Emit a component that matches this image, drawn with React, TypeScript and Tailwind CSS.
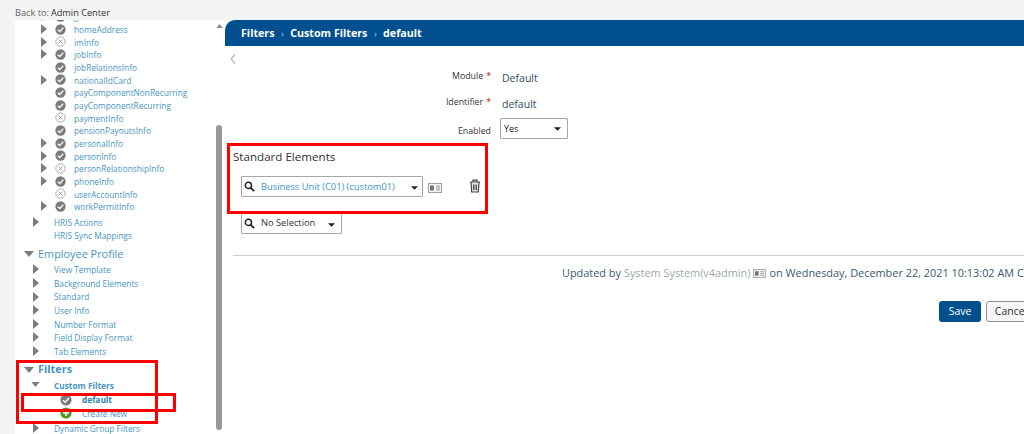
import React from "react";

const font = { fontFamily: '"Open Sans", "Noto Sans", sans-serif' };

function Tri({ down = false, className = "" }: { down?: boolean; className?: string }) {
  return down ? (
    <svg viewBox="0 0 10 6" className={className}><path d="M0 0H10L5 6Z" fill="#7d7d7d" /></svg>
  ) : (
    <svg viewBox="0 0 6 10" className={className}><path d="M0 0L6 5L0 10Z" fill="#7d7d7d" /></svg>
  );
}

function Ok({ className = "" }: { className?: string }) {
  return (
    <svg viewBox="0 0 12 12" className={className}>
      <circle cx="6" cy="6" r="5.6" fill="#7c7c7c" />
      <path d="M3 6.2L5.2 8.2L9 4" fill="none" stroke="#f4f4f4" strokeWidth="1.5" />
    </svg>
  );
}

function Off({ className = "" }: { className?: string }) {
  return (
    <svg viewBox="0 0 12 12" className={className}>
      <circle cx="6" cy="6" r="5.1" fill="#fff" stroke="#9a9a9a" strokeWidth="0.9" />
      <path d="M3.8 3.8L8.2 8.2M8.2 3.8L3.8 8.2" fill="none" stroke="#8c8c8c" strokeWidth="0.9" />
    </svg>
  );
}

function Search() {
  return (
    <svg viewBox="0 0 12 12" className="w-[11px] h-[11px] shrink-0">
      <circle cx="4.8" cy="4.8" r="3.4" fill="none" stroke="#222" strokeWidth="1.6" />
      <path d="M7.4 7.4L11 11" stroke="#222" strokeWidth="2" />
    </svg>
  );
}

function Caret({ className = "" }: { className?: string }) {
  return (
    <svg viewBox="0 0 8 4" className={`w-[7px] h-[4px] shrink-0 ${className}`}>
      <path d="M0 0H8L4 4Z" fill="#222" />
    </svg>
  );
}

function Card({ className = "" }: { className?: string }) {
  return (
    <svg viewBox="0 0 14 10" className={`shrink-0 ${className}`}>
      <rect x="0.5" y="0.5" width="13" height="9" fill="#f4f4f4" stroke="#a0a0a0" />
      <rect x="2" y="2.5" width="4" height="5" fill="#777" />
      <path d="M8 3H12M8 5H12M8 7H12" stroke="#999" />
    </svg>
  );
}

const leafRows: [string, boolean, boolean][] = [
  ["globalInfo", true, true],
  ["homeAddress", true, true],
  ["imInfo", true, false],
  ["jobInfo", true, true],
  ["jobRelationsInfo", false, true],
  ["nationalIdCard", true, true],
  ["payComponentNonRecurring", false, true],
  ["payComponentRecurring", false, true],
  ["paymentInfo", false, false],
  ["pensionPayoutsInfo", false, true],
  ["personalInfo", true, true],
  ["personInfo", true, true],
  ["personRelationshipInfo", true, false],
  ["phoneInfo", true, true],
  ["userAccountInfo", false, false],
  ["workPermitInfo", true, true],
];

const profile = ["View Template", "Background Elements", "Standard", "User Info", "Number Format", "Field Display Format", "Tab Elements"];

const link = "text-[#4795c4]";

function LeafRow({ label, arrow, ok }: { label: string; arrow: boolean; ok: boolean }) {
  return (
    <div className="flex items-center h-[12.68px] pl-[26px] text-[8.3px] leading-none whitespace-nowrap">
      <span className="w-[14px] shrink-0 flex">{arrow && <Tri className="w-[6px] h-[10px]" />}</span>
      {ok ? <Ok className="w-[11px] h-[11px] shrink-0" /> : <Off className="w-[11px] h-[11px] shrink-0" />}
      <span className={`ml-[8px] pt-[2px] ${link}`}>{label}</span>
    </div>
  );
}

function GroupRow({ label, arrow = true }: { label: string; arrow?: boolean }) {
  return (
    <div className="flex items-center h-[13.6px] pl-[18px] text-[8.3px] leading-none whitespace-nowrap">
      <span className="w-[21px] shrink-0 flex">{arrow && <Tri className="w-[6px] h-[10px]" />}</span>
      <span className={`pt-[2px] ${link}`}>{label}</span>
    </div>
  );
}

function Section({ label, bold = false }: { label: string; bold?: boolean }) {
  return (
    <div className="flex items-center h-[24px] pl-[9px] text-[10.9px] leading-none whitespace-nowrap">
      <Tri down className="w-[10px] h-[6px] shrink-0" />
      <span className={`ml-[4px] ${link} ${bold ? "font-bold" : ""}`}>{label}</span>
    </div>
  );
}

function Sidebar() {
  return (
    <aside className="relative w-[210px] shrink-0 ml-[15px] h-full bg-white overflow-hidden">
      <div className="-mt-[10px]">
        {leafRows.map(([l, a, o]) => (
          <LeafRow key={l} label={l} arrow={a} ok={o} />
        ))}
        <div className="h-[2.3px]" />
        <GroupRow label="HRIS Actions" />
        <GroupRow label="HRIS Sync Mappings" arrow={false} />
        <Section label="Employee Profile" />
        <div className="-mt-[3.6px]">
          {profile.map((l) => (
            <GroupRow key={l} label={l} />
          ))}
        </div>
        <Section label="Filters" bold />
        <div className="flex items-center h-[13px] -mt-[3.4px] pl-[16px] text-[8.3px] leading-none font-bold">
          <Tri down className="w-[9px] h-[5px] shrink-0" />
          <span className={`ml-[14px] pt-[2px] ${link}`}>Custom Filters</span>
        </div>
        <div className="flex items-center h-[15px] mt-[1px] pl-[45px] text-[8.3px] leading-none font-bold">
          <Ok className="w-[12px] h-[12px] shrink-0" />
          <span className="ml-[10px] pt-[1px] text-[#2f7fb0]">default</span>
        </div>
        <div className="flex items-center h-[12px] pl-[45px] text-[8.3px] leading-none">
          <svg viewBox="0 0 12 12" className="w-[12px] h-[12px] shrink-0">
            <circle cx="6" cy="6" r="5.6" fill="#4d9a1f" />
            <path d="M6 3V9M3 6H9" stroke="#fff" strokeWidth="1.6" />
          </svg>
          <span className={`ml-[10px] pt-[1px] ${link}`}>Create New</span>
        </div>
        <div className="h-[2px]" />
        <GroupRow label="Dynamic Group Filters" />
      </div>
      <svg viewBox="0 0 8 5" className="absolute left-[201px] top-[4px] w-[7px] h-[4px]">
        <path d="M0 5L4 0L8 5Z" fill="#8a8a8a" />
      </svg>
      <div className="absolute left-[201px] top-[105px] w-[6px] h-[305px] rounded-full bg-[#979797]" />
      {/* annotation boxes */}
      <div className="absolute left-[1px] top-[340px] w-[142px] h-[64px] border-[3px] border-[#ff0000]" />
      <div className="absolute left-[6px] top-[373px] w-[155px] h-[19px] border-[3px] border-[#ff0000]" />
    </aside>
  );
}

function Sep() {
  return <span className="mx-[6.5px] text-[9px] font-normal text-[#b9cfe3]">›</span>;
}

function FormRow({ label, req, h, labelClass = "", children }: { label: string; req?: boolean; h: string; labelClass?: string; children: React.ReactNode }) {
  return (
    <div className={`flex items-center ${h}`}>
      <div className={`w-[266px] shrink-0 text-right text-[8.8px] text-[#333] leading-none ${labelClass}`}>
        {label}
        {req && <span className="text-[#e00000] ml-[3px]">*</span>}
      </div>
      <div className="ml-[11px]">{children}</div>
    </div>
  );
}

function Main() {
  return (
    <main className="flex-1 min-w-0 h-full bg-white">
      <div className="flex items-center h-[26px] pl-[16px] bg-[#00508f] rounded-tl-[10px] text-white font-bold text-[10.7px] leading-none">
        <span>Filters</span>
        <Sep />
        <span>Custom Filters</span>
        <Sep />
        <span>default</span>
      </div>
      <div className="pl-[5px] pt-[8px] h-[20px]">
        <svg viewBox="0 0 6 10" className="w-[6px] h-[10px]">
          <path d="M5 0.5L1 5L5 9.5" fill="none" stroke="#b5b5b5" strokeWidth="1.2" />
        </svg>
      </div>
      <FormRow label="Module" req h="h-[20px]">
        <span className="text-[10.5px] text-[#2f4a5f] leading-none">Default</span>
      </FormRow>
      <FormRow label="Identifier" req h="h-[32px]">
        <span className="text-[10.5px] text-[#2f4a5f] leading-none">default</span>
      </FormRow>
      <FormRow label="Enabled" h="h-[21px]" labelClass="pt-[5px]">
        <div className="flex items-center justify-between w-[68px] h-[21px] -ml-[2px] pl-[3px] pr-[6px] border border-[#a8a8a8] rounded-[1px] text-[9px] text-[#222] leading-none">
          <span>Yes</span>
          <Caret />
        </div>
      </FormRow>
      <div className="ml-[8px] mt-[12px] text-[11.6px] leading-none text-[#333]">Standard Elements</div>
      <div className="flex items-center ml-[16px] mt-[13px]">
        <div className="flex items-center w-[182px] h-[21px] pl-[2px] pr-[4px] border border-[#a8a8a8] rounded-[1px] text-[9.3px] leading-none">
          <Search />
          <span className="ml-[6px] pt-[1px] text-[#3d95cb]">Business Unit (C01) (custom01)</span>
          <Caret className="ml-auto mt-[3px]" />
        </div>
        <Card className="w-[14px] h-[10px] ml-[5px] mt-[4px]" />
        <svg viewBox="0 0 12 14" className="w-[12px] h-[14px] ml-[27px]">
          <path d="M1 3H11M4 3V1.2H8V3M2 3.5L2.7 13H9.3L10 3.5" fill="#e8e8e8" stroke="#444" strokeWidth="1.2" />
          <path d="M4.5 5.5V11M6 5.5V11M7.5 5.5V11" stroke="#444" strokeWidth="0.9" />
        </svg>
      </div>
      <div className="flex items-center ml-[16px] mt-[16px] w-[101px] h-[21px] pl-[2px] pr-[6px] border border-[#a8a8a8] rounded-[1px] text-[9.3px] text-[#333] leading-none">
        <Search />
        <span className="ml-[6px]">No Selection</span>
        <Caret className="ml-auto mt-[3px]" />
      </div>
      <div className="ml-[8px] mt-[21px] border-t border-[#cfcfcf]" />
      <div className="flex items-center w-max ml-[337px] mt-[11px] h-[13px] text-[10.9px] text-[#3a5a70] leading-none whitespace-nowrap">
        <span>Updated by</span>
        <span className="ml-[3px] text-[#9aa7b0]">System System(v4admin)</span>
        <Card className="w-[13px] h-[9px] mx-[3px]" />
        <span>on Wednesday, December 22, 2021 10:13:02 AM CET</span>
      </div>
      <div className="flex ml-[714px] mt-[21px] gap-[5px] whitespace-nowrap">
        <button className="w-[42px] h-[21px] shrink-0 rounded-[3px] bg-[#00508f] text-white text-[10.5px] leading-none">Save</button>
        <button className="w-[50px] h-[21px] shrink-0 rounded-[3px] border border-[#8f8f8f] bg-[#f7f7f7] text-[#333] text-[10.5px] leading-none">Cancel</button>
      </div>
      {/* annotation box */}
      <div className="absolute left-[227px] top-[143px] w-[261px] h-[71px] border-[3px] border-[#ff0000] pointer-events-none" />
    </main>
  );
}

export default function App() {
  return (
    <div className="relative w-[1024px] h-[434px] overflow-hidden bg-[#f3f4f4]" style={font}>
      <div className="h-[20px] pl-[15px] pt-[5px] flex items-center text-[9.2px] leading-none">
        <span className="text-[#666]">Back to:</span>
        <span className="ml-[2px] text-[#333]">Admin Center</span>
      </div>
      <div className="flex h-[414px]">
        <Sidebar />
        <Main />
      </div>
    </div>
  );
}
